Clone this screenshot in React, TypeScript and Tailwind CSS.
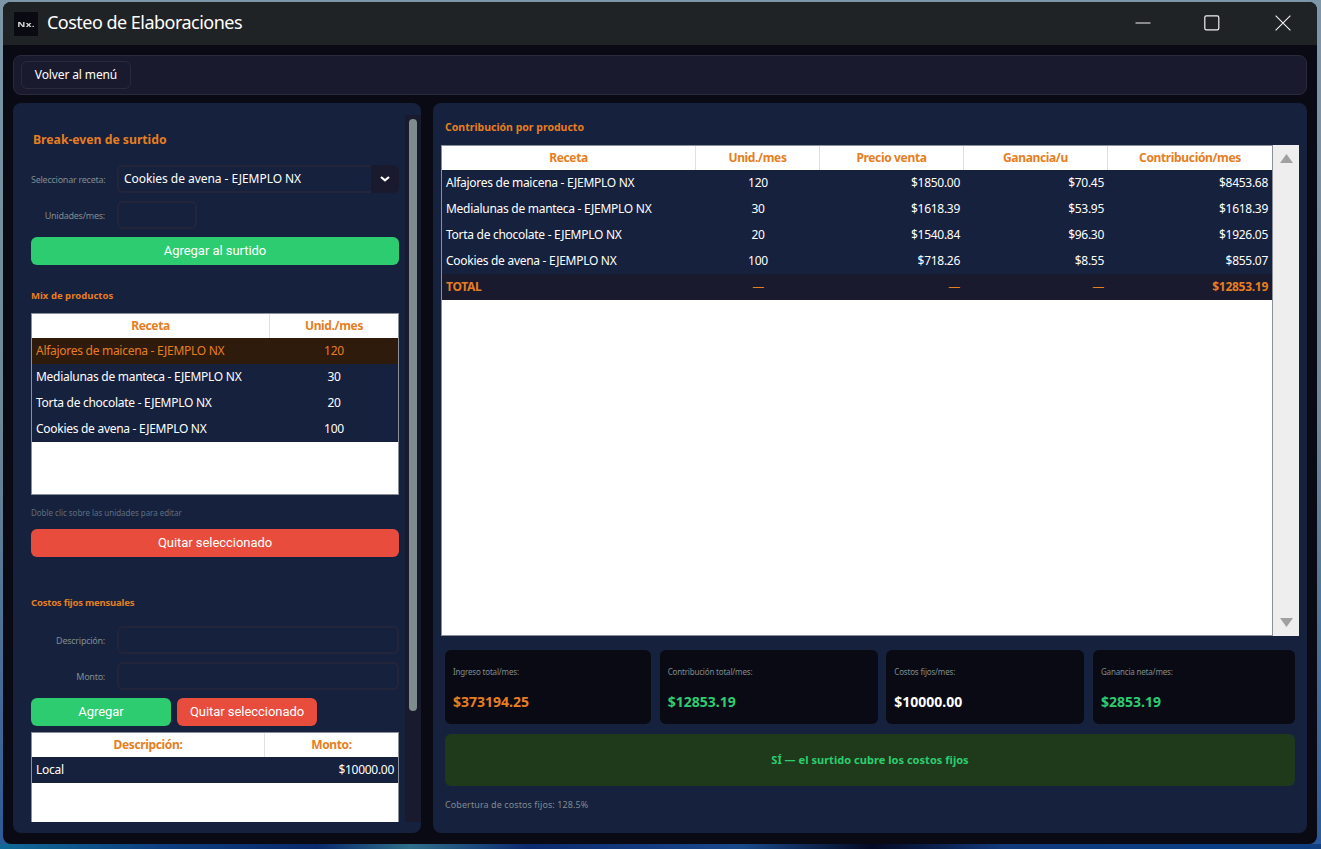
const ui = "font-['Noto_Sans',sans-serif]";
const btn = "font-['Roboto',sans-serif] text-[13px] tracking-[-0.05px] text-white flex items-center justify-center rounded-[6px] h-7";

const mix = [
  ['Alfajores de maicena - EJEMPLO NX', '120'],
  ['Medialunas de manteca - EJEMPLO NX', '30'],
  ['Torta de chocolate - EJEMPLO NX', '20'],
  ['Cookies de avena - EJEMPLO NX', '100'],
];

const contrib = [
  ['Alfajores de maicena - EJEMPLO NX', '120', '$1850.00', '$70.45', '$8453.68'],
  ['Medialunas de manteca - EJEMPLO NX', '30', '$1618.39', '$53.95', '$1618.39'],
  ['Torta de chocolate - EJEMPLO NX', '20', '$1540.84', '$96.30', '$1926.05'],
  ['Cookies de avena - EJEMPLO NX', '100', '$718.26', '$8.55', '$855.07'],
];

const cards = [
  { label: 'Ingreso total/mes:', value: '$373194.25', color: 'text-[#e67e22]', width: 'w-[206px]' },
  { label: 'Contribución total/mes:', value: '$12853.19', color: 'text-[#2ecc71]', width: 'w-[218px]' },
  { label: 'Costos fijos/mes:', value: '$10000.00', color: 'text-white', width: 'w-[198px]' },
  { label: 'Ganancia neta/mes:', value: '$2853.19', color: 'text-[#2ecc71]', width: 'w-[202px]' },
];

function Field({ label, children }: { label: string; children: React.ReactNode }) {
  return (
    <div className="flex items-center h-7">
      <span className="w-[74px] mr-3 pt-px text-right text-[9px] tracking-[-0.25px] text-[#7f8c8d] whitespace-nowrap">{label}</span>
      {children}
    </div>
  );
}

function HeaderCell({ children, className }: { children: React.ReactNode; className: string }) {
  return (
    <div className={`${className} h-6 flex items-center justify-center text-[12px] font-bold tracking-[-0.35px] text-[#e67e22] border-r border-[#e0e0e0] last:border-r-0`}>
      {children}
    </div>
  );
}

export default function App() {
  return (
    <div className={`${ui} w-screen h-screen overflow-hidden flex flex-col bg-[#0f3f80]`}>
      <div className="h-[844px] shrink-0 pt-[2px] pl-[3px] pr-[4px] bg-gradient-to-b from-[#7d97a8] via-[#6f8796] to-[#2a5a96]">
        <div className="h-[842px] rounded-[8px] overflow-hidden bg-[#0a0a14] flex flex-col">
          {/* Title bar */}
          <header className="h-[43px] shrink-0 bg-[#1f2326] flex items-center pl-[11px] pb-[2px]">
            <div className="w-6 h-6 mt-[2px] bg-[#0a0a12] flex items-center justify-center overflow-hidden">
              <span className="text-[10px] leading-[10px] font-bold text-[#d8d8d8] blur-[0.6px] tracking-[0.2px] scale-y-75">Nx.</span>
            </div>
            <h1 className="ml-[9px] text-[18px] tracking-[-0.52px] text-white">Costeo de Elaboraciones</h1>
            <div className="ml-auto flex items-center text-[#f2f2f2]">
              <svg width="16" height="16" viewBox="0 0 16 16" className="mr-[53px]" fill="none" stroke="currentColor" strokeWidth="1.1"><path d="M0.5 8h15" /></svg>
              <svg width="16" height="16" viewBox="0 0 16 16" className="mr-[55px]" fill="none" stroke="currentColor" strokeWidth="1.2"><rect x="0.8" y="0.8" width="14" height="14" rx="1.6" /></svg>
              <svg width="16" height="16" viewBox="0 0 16 16" className="mr-[26px]" fill="none" stroke="currentColor" strokeWidth="1.1"><path d="M0.6 0.6l14.8 14.8M15.4 0.6L0.6 15.4" /></svg>
            </div>
          </header>

          <div className="flex-1 min-h-0 flex flex-col px-[10px] pt-[10px] pb-[11px] gap-2">
            {/* Top bar */}
            <div className="h-10 shrink-0 bg-[#1a1a2e] border border-[#2a2a3e] rounded-[8px] flex items-center px-[7px]">
              <button className={`${ui} w-[110px] h-7 rounded-[6px] border border-[#2a2a3e] text-[12px] tracking-[-0.12px] text-white`}>Volver al menú</button>
            </div>

            <div className="flex-1 min-h-0 flex gap-3">
              {/* Left panel */}
              <aside className="w-[408px] shrink-0 bg-[#16213e] rounded-[8px] flex pt-3 pb-[11px] overflow-hidden">
                <div className="flex-1 min-w-0 overflow-hidden pl-[18px] pr-[6px] flex flex-col">
                  <h2 className="mt-[15px] ml-[2px] h-[20px] text-[12.2px] leading-[20px] font-bold text-[#e67e22]">Break-even de surtido</h2>
                  <div className="mt-[15px] flex flex-col gap-2">
                    <Field label="Seleccionar receta:">
                      <div className="flex-1 h-7 flex items-center">
                        <span className="flex-1 h-7 flex items-center rounded-l-[6px] border-2 border-r-0 border-[#23253a] pl-[5px] text-[12px] tracking-[-0.05px] text-white">Cookies de avena - EJEMPLO NX</span>
                        <span className="w-7 h-7 rounded-r-[6px] bg-[#1a1a2e] flex items-center justify-center text-white">
                          <svg width="10" height="6" viewBox="0 0 10 6" fill="none" stroke="currentColor" strokeWidth="2.2"><path d="M1 1l4 3.4L9 1" /></svg>
                        </span>
                      </div>
                    </Field>
                    <Field label="Unidades/mes:">
                      <div className="w-20 h-7 rounded-[6px] border-2 border-[#23253a]" />
                    </Field>
                  </div>
                  <button className={`${btn} mt-2 shrink-0 bg-[#2ecc71]`}>Agregar al surtido</button>

                  <h3 className="mt-[23px] h-[15px] text-[9.5px] leading-[15px] font-bold tracking-[0.03px] text-[#e67e22]">Mix de productos</h3>
                  <div className="mt-[10px] h-[182px] shrink-0 bg-white border border-[#8a8f98]">
                    <div className="flex">
                      <HeaderCell className="w-[238px]">Receta</HeaderCell>
                      <HeaderCell className="flex-1">Unid./mes</HeaderCell>
                    </div>
                    {mix.map((row, i) => (
                      <div key={row[0]} className={`h-[26px] flex items-center text-[12px] tracking-[-0.28px] ${i === 0 ? 'bg-[#2f1b0c] text-[#e67e22]' : 'bg-[#16213e] text-white'}`}>
                        <span className="w-[238px] pl-1 whitespace-nowrap">{row[0]}</span>
                        <span className="flex-1 text-center">{row[1]}</span>
                      </div>
                    ))}
                  </div>
                  <p className="mt-[12px] h-[12px] text-[8px] leading-[12px] tracking-[-0.03px] text-[#5f6e7c]">Doble clic sobre las unidades para editar</p>
                  <button className={`${btn} mt-[10px] shrink-0 bg-[#e74c3c]`}>Quitar seleccionado</button>

                  <h3 className="mt-[38px] h-[15px] text-[9.5px] leading-[15px] font-bold tracking-[-0.2px] text-[#e67e22]">Costos fijos mensuales</h3>
                  <div className="mt-[16px] flex flex-col gap-2">
                    <Field label="Descripción:"><div className="flex-1 h-7 rounded-[6px] border-2 border-[#23253a]" /></Field>
                    <Field label="Monto:"><div className="flex-1 h-7 rounded-[6px] border-2 border-[#23253a]" /></Field>
                  </div>
                  <div className="mt-2 flex gap-[6px] shrink-0">
                    <button className={`${btn} w-[140px] bg-[#2ecc71]`}>Agregar</button>
                    <button className={`${btn} w-[140px] bg-[#e74c3c]`}>Quitar seleccionado</button>
                  </div>
                  <div className="mt-[6px] h-[100px] shrink-0 bg-white border border-[#8a8f98]">
                    <div className="flex">
                      <HeaderCell className="w-[233px]">Descripción:</HeaderCell>
                      <HeaderCell className="flex-1">Monto:</HeaderCell>
                    </div>
                    <div className="h-[26px] bg-[#16213e] flex items-center justify-between px-1 text-[12px] tracking-[-0.28px] text-white">
                      <span>Local</span>
                      <span>$10000.00</span>
                    </div>
                  </div>
                </div>
                <div className="w-4 shrink-0 bg-[#1a1a2e] pt-1 flex justify-center">
                  <div className="w-2 h-[592px] rounded-[4px] bg-[#7f8c8d]" />
                </div>
              </aside>

              {/* Right panel */}
              <main className="flex-1 min-w-0 bg-[#16213e] rounded-[8px] pl-2 pr-2 flex flex-col">
                <h2 className="mt-4 ml-1 h-[16px] text-[10.5px] leading-[16px] font-bold text-[#e67e22]">Contribución por producto</h2>
                <div className="mt-[10px] h-[491px] shrink-0 flex">
                  <div className="flex-1 min-w-0 bg-white border border-[#8a8f98]">
                    <div className="flex">
                      <HeaderCell className="w-[254px]">Receta</HeaderCell>
                      <HeaderCell className="w-[124px]">Unid./mes</HeaderCell>
                      <HeaderCell className="w-[144px]">Precio venta</HeaderCell>
                      <HeaderCell className="w-[144px]">Ganancia/u</HeaderCell>
                      <HeaderCell className="flex-1">Contribución/mes</HeaderCell>
                    </div>
                    {contrib.map(row => (
                      <div key={row[0]} className="h-[26px] bg-[#16213e] flex items-center text-[12px] tracking-[-0.28px] text-white">
                        <span className="w-[254px] pl-1 whitespace-nowrap">{row[0]}</span>
                        <span className="w-[124px] text-center">{row[1]}</span>
                        <span className="w-[144px] pr-1 text-right">{row[2]}</span>
                        <span className="w-[144px] pr-1 text-right">{row[3]}</span>
                        <span className="flex-1 pr-1 text-right">{row[4]}</span>
                      </div>
                    ))}
                    <div className="h-[26px] bg-[#1a1a2e] flex items-center text-[12px] tracking-[-0.28px] text-[#e67e22]">
                      <span className="w-[254px] pl-1 font-bold">TOTAL</span>
                      <span className="w-[124px] text-center">—</span>
                      <span className="w-[144px] pr-1 text-right">—</span>
                      <span className="w-[144px] pr-1 text-right">—</span>
                      <span className="flex-1 pr-1 text-right font-bold">$12853.19</span>
                    </div>
                  </div>
                  <div className="w-[26px] shrink-0 bg-[#eeeeee] flex flex-col items-center justify-between py-[9px]">
                    <svg width="13" height="9" viewBox="0 0 13 9" fill="#a0a0a0"><path d="M6.5 0L13 9H0z" /></svg>
                    <svg width="13" height="9" viewBox="0 0 13 9" fill="#a0a0a0"><path d="M6.5 9L0 0h13z" /></svg>
                  </div>
                </div>

                <div className="mt-[14px] mx-1 flex justify-between shrink-0">
                  {cards.map(c => (
                    <div key={c.label} className={`${c.width} h-[74px] rounded-[6px] bg-[#0a0a14] pl-2 flex flex-col`}>
                      <span className="mt-[16px] h-[12px] text-[8px] leading-[12px] tracking-[-0.18px] text-[#7f8c8d]">{c.label}</span>
                      <span className={`mt-[13px] text-[14px] font-bold ${c.color}`}>{c.value}</span>
                    </div>
                  ))}
                </div>

                <div className="mt-[10px] mx-1 h-[52px] shrink-0 rounded-[6px] bg-[#1e3a1a] flex items-center justify-center text-[11px] tracking-[0.04px] font-bold text-[#2ecc71]">
                  SÍ — el surtido cubre los costos fijos
                </div>
                <p className="mt-[12px] ml-1 text-[9px] leading-[13px] tracking-[0.09px] text-[#7f8c8d]">Cobertura de costos fijos: 128.5%</p>
              </main>
            </div>
          </div>
        </div>
      </div>
      <div className="flex-1 bg-[linear-gradient(90deg,#0f6a96_0%,#0d3f80_12%,#0a2a6c_24%,#2f6f8a_31%,#0c2a70_40%,#1a4a8c_56%,#050a24_66%,#123a7c_76%,#0a3f86_92%,#113f80_100%)]" />
    </div>
  );
}
